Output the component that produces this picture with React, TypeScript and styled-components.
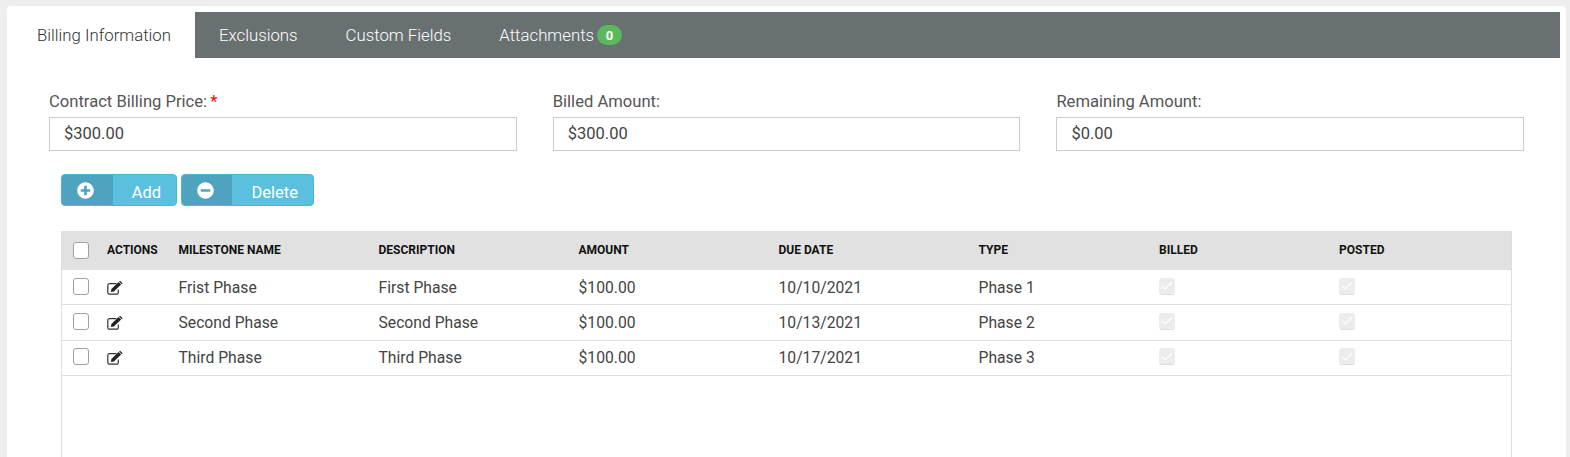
import React from 'react'
import styled, { createGlobalStyle } from 'styled-components'
import { FaMinusCircle, FaPlusCircle } from 'react-icons/fa'
import { FiCheck } from 'react-icons/fi'

const GlobalStyle = createGlobalStyle`
  html, body {
    margin: 0;
    height: 100%;
    overflow: hidden;
    background: #eeeeee;
  }
  body {
    font-family: Roboto, "Liberation Sans", sans-serif;
  }
`

const Page = styled.div`
  padding: 6px 4px 0 7px;
`

const Card = styled.div`
  background: #fff;
  border-radius: 4px 4px 0 0;
  padding: 6px 6px 0 5px;
  height: 451px;
  overflow: hidden;
  box-sizing: border-box;
`

const Tabs = styled.div`
  display: flex;
  height: 46px;
  background: #697072;
`

const Tab = styled.div<{ $active?: boolean }>`
  display: flex;
  align-items: center;
  padding: 0 24px;
  font-size: 16.8px;
  font-weight: 300;
  color: #fff;

  ${props => props.$active && `
    width: 183px;
    box-sizing: border-box;
    padding-left: 25px;
    background: #fff;
    color: #333;
  `}
`

const Badge = styled.span`
  display: inline-flex;
  align-items: center;
  justify-content: center;
  width: 25px;
  height: 20px;
  margin-left: 3px;
  border-radius: 10px;
  background: #5cb85c;
  color: #fff;
  font-size: 13px;
  font-weight: 700;
`

const Fields = styled.div`
  display: grid;
  grid-template-columns: repeat(3, 467.7px);
  column-gap: 36px;
  padding: 34px 0 0 37px;
`

const Field = styled.div`
  display: flex;
  flex-direction: column;
`

const Label = styled.div`
  height: 25px;
  font-size: 16.6px;
  line-height: 19px;
  font-weight: 400;
  color: #555;
`

const Required = styled.span`
  color: #f00;
  margin-left: 3px;
`

const ValueBox = styled.div`
  box-sizing: border-box;
  height: 34px;
  padding-left: 14px;
  border: 1px solid #ccc;
  font-size: 16.5px;
  line-height: 32px;
  color: #444;
`

const Toolbar = styled.div`
  display: flex;
  gap: 4px;
  padding: 23px 0 0 49px;
`

const ActionButton = styled.div<{ $width: number; $iconWidth: number }>`
  display: flex;
  box-sizing: border-box;
  width: ${props => props.$width}px;
  height: 32px;
  border: 1px solid #46b8da;
  border-radius: 4px;
  overflow: hidden;
  background: #5bc0de;
  color: #fff;
  font-size: 16.5px;

  .icon {
    display: flex;
    justify-content: flex-start;
    padding: 7px 0 0 15px;
    box-sizing: border-box;
    width: ${props => props.$iconWidth}px;
    background: #4fa3bf;
    font-size: 17px;
  }

  .text {
    flex: 1;
    text-align: right;
    padding: 8px 15px 0 0;
    line-height: 19px;
  }
`

const Table = styled.div`
  box-sizing: border-box;
  width: 1451px;
  height: 300px;
  margin: 25px 0 0 49px;
  border: 1px solid #ddd;
  border-top: 0;
`

const Row = styled.div<{ $head?: boolean }>`
  display: grid;
  grid-template-columns: 34px 71.5px 200px 200px 200px 200px 180.6px 180px 1fr;
  align-items: center;
  padding-left: 11px;
  height: ${props => (props.$head ? '39px' : '35.33px')};
  box-sizing: border-box;
  border-bottom: 1px solid #e0e0e0;
  background: ${props => (props.$head ? '#e1e1e1' : '#fff')};
  color: ${props => (props.$head ? '#111' : '#444')};
  font-size: ${props => (props.$head ? '12px' : '15.7px')};
  font-weight: ${props => (props.$head ? 700 : 400)};
`

const Check = styled.span<{ $disabled?: boolean }>`
  display: flex;
  align-items: center;
  justify-content: center;
  box-sizing: border-box;
  width: 16px;
  height: 17px;
  border-radius: 3px;
  color: #fff;
  font-size: 14px;
  background: ${props => (props.$disabled ? '#ececec' : '#fff')};
  border: 1px solid ${props => (props.$disabled ? '#ececec' : '#a0a0a0')};
  border-bottom-color: ${props => (props.$disabled ? '#ddd' : '#a0a0a0')};
`

const RowCheck = styled(Check)`
  margin-bottom: 2px;
`

const EditSvg = styled.svg`
  display: block;
  width: 16px;
  height: 14px;
  margin-top: 1px;
`

const EditIcon: React.FC = () => (
  <EditSvg viewBox='0 0 16 14'>
    <path d='M9.5 2.7H2.4A1.6 1.6 0 0 0 .8 4.3v7.3a1.6 1.6 0 0 0 1.6 1.6h7.3a1.6 1.6 0 0 0 1.6-1.6V8.5' fill='none' stroke='#333' strokeWidth='1.2' />
    <path d='M4.4 8 11.6 .9l2.5 2.5-7.2 7.2-3 .5z' fill='#222' />
    <path d='M12.4.2a.9.9 0 0 1 1.2 0l1.5 1.5a.9.9 0 0 1 0 1.2l-.3.3-2.7-2.7z' fill='#222' />
  </EditSvg>
)

const rows = [
  { name: 'Frist Phase', description: 'First Phase', due: '10/10/2021', type: 'Phase 1' },
  { name: 'Second Phase', description: 'Second Phase', due: '10/13/2021', type: 'Phase 2' },
  { name: 'Third Phase', description: 'Third Phase', due: '10/17/2021', type: 'Phase 3' },
]

const App: React.FC = () => {
  return (
    <Page>
      <GlobalStyle />
      <Card>
        <Tabs>
          <Tab $active>Billing Information</Tab>
          <Tab>Exclusions</Tab>
          <Tab>Custom Fields</Tab>
          <Tab>Attachments<Badge>0</Badge></Tab>
        </Tabs>
        <Fields>
          <Field>
            <Label>Contract Billing Price:<Required>*</Required></Label>
            <ValueBox>$300.00</ValueBox>
          </Field>
          <Field>
            <Label>Billed Amount:</Label>
            <ValueBox>$300.00</ValueBox>
          </Field>
          <Field>
            <Label>Remaining Amount:</Label>
            <ValueBox>$0.00</ValueBox>
          </Field>
        </Fields>
        <Toolbar>
          <ActionButton $width={116} $iconWidth={51}>
            <span className='icon'><FaPlusCircle /></span>
            <span className='text'>Add</span>
          </ActionButton>
          <ActionButton $width={133} $iconWidth={50}>
            <span className='icon'><FaMinusCircle /></span>
            <span className='text'>Delete</span>
          </ActionButton>
        </Toolbar>
        <Table>
          <Row $head>
            <Check />
            <span>ACTIONS</span>
            <span>MILESTONE NAME</span>
            <span>DESCRIPTION</span>
            <span>AMOUNT</span>
            <span>DUE DATE</span>
            <span>TYPE</span>
            <span>BILLED</span>
            <span>POSTED</span>
          </Row>
          {rows.map(row => (
            <Row key={row.name}>
              <RowCheck />
              <span><EditIcon /></span>
              <span>{row.name}</span>
              <span>{row.description}</span>
              <span>$100.00</span>
              <span>{row.due}</span>
              <span>{row.type}</span>
              <RowCheck $disabled><FiCheck /></RowCheck>
              <RowCheck $disabled><FiCheck /></RowCheck>
            </Row>
          ))}
        </Table>
      </Card>
    </Page>
  )
}

export default App
